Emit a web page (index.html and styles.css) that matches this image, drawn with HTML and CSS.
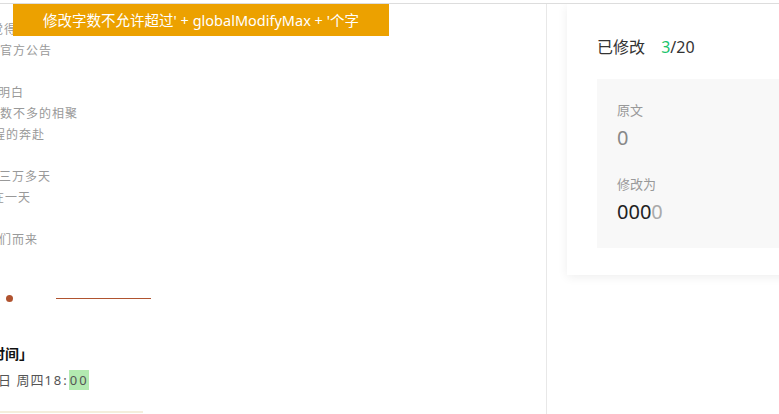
FILE: index.html
```html
<!DOCTYPE html>
<html lang="zh-CN">
<head>
    <meta charset="UTF-8">
    <meta name="viewport" content="width=device-width, initial-scale=1.0">
    <title>修改文案</title>
    <link rel="stylesheet" href="styles.css">
</head>
<body>
    <div class="page">
        <div class="toast">修改字数不允许超过' + globalModifyMax + '个字</div>

        <div class="article">
            <div class="poem">
                <p class="line cut-9">觉得</p>
                <p class="line cut-0">官方公告</p>
                <p class="line blank"></p>
                <p class="line cut-2">明白</p>
                <p class="line cut-0">数不多的相聚</p>
                <p class="line cut-7">程的奔赴</p>
                <p class="line blank"></p>
                <p class="line cut-1">三万多天</p>
                <p class="line cut-8">在一天</p>
                <p class="line blank"></p>
                <p class="line cut-1">们而来</p>
            </div>

            <div class="divider-row">
                <span class="dot"></span>
                <span class="rule"></span>
            </div>

            <div class="event">
                <div class="event-title">时间」</div>
                <div class="event-date">日 周四<span class="digits">18:<span class="mark">00</span></span></div>
            </div>

            <div class="foot-line"></div>
        </div>

        <div class="side">
            <div class="card">
                <div class="count">
                    <span class="count-label">已修改</span>
                    <span class="count-value"><span class="done">3</span>/20</span>
                </div>
                <div class="diff">
                    <div class="diff-label">原文</div>
                    <div class="diff-text old">0</div>
                    <div class="diff-label second">修改为</div>
                    <div class="diff-text">000<span class="added">0</span></div>
                </div>
            </div>
        </div>
    </div>
</body>
</html>
```

FILE: styles.css
```css
:root {
    --text: #333333;
    --muted: #999999;
    --line: #e8e8e8;
    --accent: #eca100;
    --rust: #b0532f;
    --green: #19c36b;
    --panel: #f8f8f8;
}

* {
    margin: 0;
    padding: 0;
    box-sizing: border-box;
}

body {
    font-family: "Noto Sans", "Noto Sans CJK SC", sans-serif;
    background: #ffffff;
    color: var(--text);
    overflow: hidden;
}

.page {
    position: relative;
    display: flex;
    height: 411px;
    margin-top: 3px;
    border-top: 1px solid #dddddd;
}

.toast {
    position: absolute;
    top: 0;
    left: 13px;
    width: 376px;
    height: 32px;
    line-height: 32px;
    background: var(--accent);
    color: #ffffff;
    font-size: 14.5px;
    text-align: center;
    white-space: nowrap;
    z-index: 2;
}

/* left column: the article, scrolled off to the left */
.article {
    width: 547px;
    flex-shrink: 0;
    overflow: hidden;
    border-right: 1px solid var(--line);
}

.poem {
    padding-top: 15px;
}

.line {
    height: 21px;
    line-height: 21px;
    font-size: 12px;
    letter-spacing: 1px;
    color: var(--muted);
    white-space: nowrap;
}

.cut-0 { text-indent: 0; }
.cut-1 { text-indent: -1px; }
.cut-2 { text-indent: -2px; }
.cut-7 { text-indent: -7px; }
.cut-8 { text-indent: -8px; }
.cut-9 { text-indent: -9px; }

.divider-row {
    display: flex;
    align-items: center;
    height: 7px;
    margin-top: 45px;
    padding-left: 6px;
}

.dot {
    width: 7px;
    height: 7px;
    border-radius: 50%;
    background: var(--rust);
}

.rule {
    width: 95px;
    height: 1px;
    margin-left: 43px;
    background: var(--rust);
}

.event {
    margin-top: 42px;
}

.event-title {
    height: 20px;
    line-height: 20px;
    font-size: 14px;
    font-weight: 700;
    color: #111111;
    text-indent: -9px;
    white-space: nowrap;
}

.event-date {
    height: 20px;
    line-height: 20px;
    margin-top: 6px;
    font-size: 13px;
    letter-spacing: 1px;
    color: #555555;
    text-indent: -2px;
    white-space: nowrap;
}

.digits {
    letter-spacing: 2px;
}

.mark {
    display: inline-block;
    padding-left: 1px;
    background: #b3eab1;
    text-indent: 0;
}

.foot-line {
    width: 143px;
    height: 2px;
    margin-top: 21px;
    background: #f4eedc;
}

/* right column: modification card */
.side {
    flex: 1;
    overflow: hidden;
    padding-left: 20px;
}

.card {
    width: 300px;
    padding: 31px 30px 27px;
    background: #ffffff;
    box-shadow: 0 2px 10px rgba(0, 0, 0, 0.07);
}

.count {
    height: 24px;
    line-height: 24px;
    font-size: 16px;
    color: var(--text);
}

.count-value {
    margin-left: 12px;
}

.done {
    color: var(--green);
}

.diff {
    margin-top: 20px;
    padding: 21px 20px 22px;
    background: var(--panel);
}

.diff-label {
    height: 20px;
    line-height: 20px;
    font-size: 13px;
    color: var(--muted);
}

.diff-label.second {
    margin-top: 22px;
}

.diff-text {
    height: 28px;
    line-height: 28px;
    margin-top: 4px;
    font-size: 20px;
    color: #222222;
}

.diff-text.old {
    color: #888888;
}

.added {
    color: #aaaaaa;
}
```
